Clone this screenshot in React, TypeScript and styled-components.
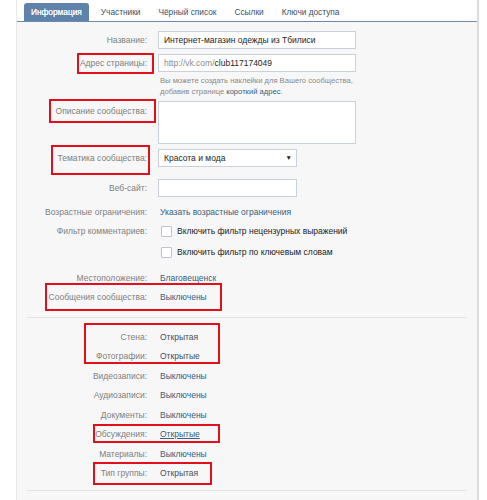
import React from "react";
import styled, { createGlobalStyle } from "styled-components";

const GlobalStyle = createGlobalStyle`
  html, body { margin: 0; padding: 0; background: #ffffff; }
  body { font-family: "Liberation Sans", Arial, sans-serif; font-size: 8.5px; }
`;

const Page = styled.div`
  position: relative;
  width: 487px;
  height: 500px;
  overflow: hidden;
  background: #ffffff;
`;

const Panel = styled.div`
  margin-left: 16px;
  width: 460px;
  height: 500px;
  background: #f7f7f7;
  border-left: 1px solid #e8e8e8;
  border-right: 2px solid #dcdcdc;
`;

const TabBar = styled.div`
  display: flex;
  align-items: flex-end;
  height: 21px;
  padding-left: 7px;
  background: #ffffff;
  border-bottom: 1px solid #6d8bb0;
`;

const Tab = styled.div<{ $active?: boolean }>`
  height: 18px;
  line-height: 18px;
  padding: 0 ${(p) => (p.$active ? "7px" : "9px")};
  margin-right: ${(p) => (p.$active ? "3px" : "0")};
  font-size: 8.3px;
  color: ${(p) => (p.$active ? "#ffffff" : "#3c4f66")};
  background: ${(p) => (p.$active ? "#5f82aa" : "transparent")};
  border-radius: 3px 3px 0 0;
  text-shadow: ${(p) => (p.$active ? "0 0 0.4px #fff" : "none")};
  white-space: nowrap;
`;

const Form = styled.div`
  padding-top: 9px;
`;

const Row = styled.div<{ $mt?: number; $h?: number }>`
  display: grid;
  grid-template-columns: 130px 1fr;
  column-gap: 11px;
  margin-top: ${(p) => p.$mt ?? 0}px;
  min-height: ${(p) => p.$h ?? 19.5}px;
  align-items: center;
`;

const Label = styled.div<{ $top?: boolean }>`
  text-align: right;
  color: #808080;
  white-space: nowrap;
  align-self: ${(p) => (p.$top ? "start" : "center")};
  padding-top: ${(p) => (p.$top ? "5px" : "0")};
`;

const Value = styled.div`
  display: flex;
  flex-direction: column;
`;

const Input = styled.div<{ $w: number; $h?: number }>`
  box-sizing: border-box;
  width: ${(p) => p.$w}px;
  height: ${(p) => p.$h ?? 18}px;
  line-height: ${(p) => (p.$h ?? 18) - 2}px;
  padding: 0 5px;
  background: #ffffff;
  border: 1px solid #c9d1da;
  color: #1e1e1e;
  white-space: nowrap;
  overflow: hidden;
`;

const Muted = styled.span`
  color: #8a8a8a;
`;

const Select = styled(Input)`
  display: flex;
  justify-content: space-between;
  align-items: center;
  padding-right: 4px;
`;

const Caret = styled.span`
  font-size: 6.5px;
  color: #222;
`;

const Hint = styled.div`
  margin-left: 2px;
  font-size: 7.6px;
  line-height: 11px;
  color: #8a8a8a;
`;

const Link = styled.span<{ $under?: boolean; $dark?: boolean }>`
  margin-left: 2px;
  color: ${(p) => (p.$dark ? "#3f4f60" : "#35607f")};
  text-decoration: ${(p) => (p.$under ? "underline" : "none")};
  white-space: nowrap;
`;

const Check = styled.label`
  display: flex;
  align-items: center;
  gap: 5px;
  margin-left: 3px;
  color: #222;
  white-space: nowrap;
`;

const Box = styled.span`
  box-sizing: border-box;
  width: 11px;
  height: 11px;
  background: #fff;
  border: 1px solid #b9c4cf;
  border-radius: 1px;
`;

const Separator = styled.div<{ $mt: number; $mb?: number }>`
  height: 1px;
  background: #e3e3e3;
  margin: ${(p) => p.$mt}px 10px ${(p) => p.$mb ?? 0}px 10px;
`;

const Mark = styled.div`
  position: absolute;
  box-sizing: border-box;
  border: 2px solid #e3101c;
  pointer-events: none;
`;

const marks = [
  { x: 77, y: 53, w: 77, h: 21 },
  { x: 49, y: 99, w: 107, h: 24 },
  { x: 51, y: 145, w: 99, h: 30 },
  { x: 45, y: 283, w: 177, h: 28 },
  { x: 84, y: 323, w: 136, h: 41 },
  { x: 93, y: 424, w: 127, h: 19 },
  { x: 93, y: 462, w: 119, h: 23 },
];

const sections: { label: string; value: string; under?: boolean; dark?: boolean }[] = [
  { label: "Стена:", value: "Открытая", dark: true },
  { label: "Фотографии:", value: "Открытые", dark: true },
  { label: "Видеозаписи:", value: "Выключены" },
  { label: "Аудиозаписи:", value: "Выключены" },
  { label: "Документы:", value: "Выключены" },
  { label: "Обсуждения:", value: "Открытые", under: true },
  { label: "Материалы:", value: "Выключены" },
  { label: "Тип группы:", value: "Открытая", dark: true },
];

export default function App() {
  return (
    <Page>
      <GlobalStyle />
      <Panel>
        <TabBar>
          <Tab $active>Информация</Tab>
          <Tab>Участники</Tab>
          <Tab>Чёрный список</Tab>
          <Tab>Ссылки</Tab>
          <Tab>Ключи доступа</Tab>
        </TabBar>
        <Form>
          <Row $h={18}>
            <Label>Название:</Label>
            <Input $w={198}>Интернет-магазин одежды из Тбилиси</Input>
          </Row>
          <Row $h={18} $mt={5}>
            <Label>Адрес страницы:</Label>
            <Input $w={198}>
              <Muted>http://vk.com/</Muted>club117174049
            </Input>
          </Row>
          <Row $h={22} $mt={3}>
            <span />
            <Hint>
              Вы можете создать наклейки для Вашего сообщества,
              <br />
              добавив странице <Link style={{ marginLeft: 0 }}>короткий адрес</Link>.
            </Hint>
          </Row>
          <Row $h={43} $mt={4}>
            <Label $top>Описание сообщества:</Label>
            <Input $w={198} $h={43} />
          </Row>
          <Row $h={18} $mt={5}>
            <Label>Тематика сообщества:</Label>
            <Select $w={139}>
              <span>Красота и мода</span>
              <Caret>▼</Caret>
            </Select>
          </Row>
          <Row $h={18} $mt={12}>
            <Label>Веб-сайт:</Label>
            <Input $w={139} />
          </Row>
          <Row $mt={5} $h={19}>
            <Label>Возрастные ограничения:</Label>
            <Link>Указать возрастные ограничения</Link>
          </Row>
          <Row $h={20}>
            <Label>Фильтр комментариев:</Label>
            <Check>
              <Box />
              Включить фильтр нецензурных выражений
            </Check>
          </Row>
          <Row $h={20} $mt={1}>
            <span />
            <Check>
              <Box />
              Включить фильтр по ключевым словам
            </Check>
          </Row>
          <Row $mt={6} $h={19}>
            <Label>Местоположение:</Label>
            <Link>Благовещенск</Link>
          </Row>
          <Row $h={20}>
            <Label>Сообщения сообщества:</Label>
            <Link>Выключены</Link>
          </Row>
          <Separator $mt={10} $mb={9} />
          <Value>
            {sections.map((s) => (
              <Row key={s.label}>
                <Label>{s.label}</Label>
                <Link $under={s.under} $dark={s.dark}>
                  {s.value}
                </Link>
              </Row>
            ))}
          </Value>
          <Separator $mt={7} />
        </Form>
      </Panel>
      {marks.map((m, i) => (
        <Mark key={i} style={{ left: m.x, top: m.y, width: m.w, height: m.h }} />
      ))}
    </Page>
  );
}
